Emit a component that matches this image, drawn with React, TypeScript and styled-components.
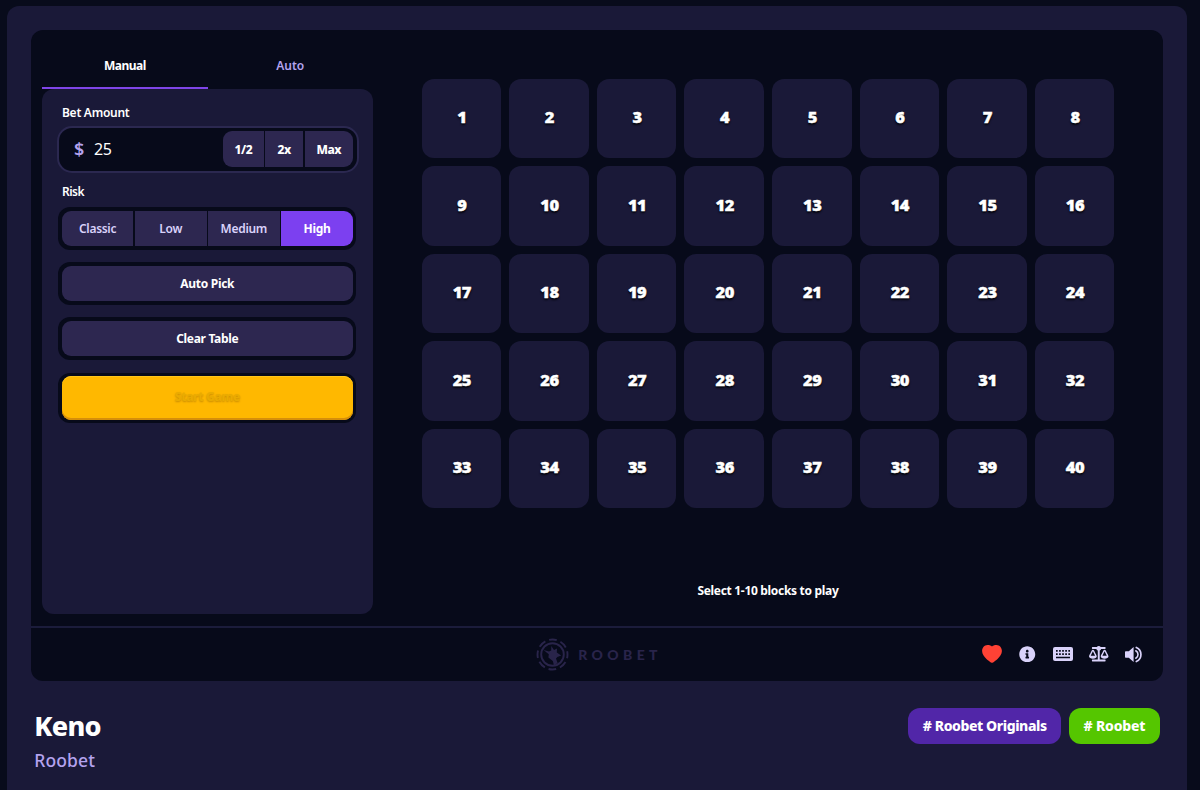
import React, { useState } from 'react';
import styled, { createGlobalStyle, css } from 'styled-components';
import { FaBalanceScale, FaInfoCircle } from 'react-icons/fa';

const colors = {
  page: '#080b1b',
  panel: '#1a1938',
  well: '#070a1a',
  button: '#2d2750',
  line: '#1b1c3b',
  lilac: '#b4a3ef',
  pale: '#d9d2fa',
  accent: '#7c40f0',
};

const GlobalStyle = createGlobalStyle`
  * { box-sizing: border-box; }
  body {
    margin: 0;
    background: ${colors.page};
    color: #fff;
    font-family: 'Noto Sans', 'Open Sans', sans-serif;
    overflow: hidden;
  }
  button {
    border: 0;
    padding: 0;
    margin: 0;
    color: inherit;
    font: inherit;
    letter-spacing: inherit;
    cursor: pointer;
  }
`;

const Page = styled.div`
  height: 790px;
  padding: 6px 13px 0 7px;
  overflow: hidden;
`;

const Shell = styled.main`
  height: 800px;
  padding: 23.5px 24px 0 23.7px;
  background: ${colors.panel};
  border-radius: 12px;
`;

const Game = styled.section`
  height: 651.5px;
  display: flex;
  flex-direction: column;
  background: ${colors.well};
  border-radius: 12px;
  overflow: hidden;
`;

const GameBody = styled.div`
  height: 596.5px;
  display: flex;
  padding: 13px 0 12.5px 11.6px;
`;

const Sidebar = styled.aside`
  width: 330.6px;
  display: flex;
  flex-direction: column;
`;

const Tabs = styled.div`
  display: flex;
  height: 46px;
`;

const Tab = styled.button<{ $active?: boolean }>`
  flex: 1;
  height: 46px;
  padding-top: 2px;
  background: none;
  border-bottom: 2px solid ${(p) => (p.$active ? '#7f45e8' : 'transparent')};
  color: ${(p) => (p.$active ? '#fff' : colors.lilac)};
  font-size: 12px;
  font-weight: ${(p) => (p.$active ? 700 : 600)};
  letter-spacing: ${(p) => (p.$active ? -0.48 : -0.05)}px;
`;

const Controls = styled.div`
  flex: 1;
  display: flex;
  flex-direction: column;
  padding: 15px 16px 0 15.5px;
  background: ${colors.panel};
  border-radius: 12px;
`;

const Label = styled.label<{ $tight?: boolean }>`
  display: block;
  height: 18px;
  line-height: 18px;
  padding-left: 4.2px;
  font-size: 12px;
  font-weight: 600;
  letter-spacing: ${(p) => (p.$tight ? -0.5 : -0.26)}px;
`;

const BetField = styled.div`
  display: flex;
  align-items: center;
  width: 302px;
  height: 47px;
  margin: 4px 0 10px -1.2px;
  padding: 0 3.5px 0 15.5px;
  background: ${colors.well};
  border: 2px solid #2b2850;
  border-radius: 15px;
`;

const Currency = styled.span`
  width: 20px;
  color: ${colors.lilac};
  font-size: 18px;
  font-weight: 600;
  line-height: 24px;
`;

const Amount = styled.span`
  flex: 1;
  font-size: 16px;
  line-height: 24px;
  letter-spacing: -0.6px;
`;

const Multipliers = styled.div`
  display: flex;
  gap: 1.5px;
  border-radius: 9px;
  overflow: hidden;
`;

const Multiplier = styled.button<{ $width: number }>`
  width: ${(p) => p.$width}px;
  height: 35.5px;
  background: ${colors.button};
  font-size: 12px;
  font-weight: 800;
  letter-spacing: -0.5px;
`;

const inset = css`
  width: 298px;
  margin-left: 0.5px;
  padding: 3.5px;
  background: ${colors.well};
  border-radius: 12px;
`;

const RiskGroup = styled.div`
  ${inset}
  display: flex;
  gap: 1.5px;
  margin-top: 6.5px;
`;

const RiskOption = styled.button<{ $active?: boolean }>`
  flex: 1;
  height: 35.7px;
  padding-top: 1px;
  background: ${(p) => (p.$active ? colors.accent : colors.button)};
  color: ${(p) => (p.$active ? '#fff' : colors.pale)};
  font-size: 12px;
  font-weight: ${(p) => (p.$active ? 700 : 600)};
  letter-spacing: ${(p) => (p.$active ? -0.35 : -0.3)}px;
  &:first-child { border-radius: 9px 0 0 9px; }
  &:last-child { border-radius: 0 9px 9px 0; }
`;

const Slot = styled.div<{ $gap: number }>`
  ${inset}
  display: flex;
  margin-top: ${(p) => p.$gap}px;
`;

const ActionButton = styled.button`
  flex: 1;
  height: 35.5px;
  background: ${colors.button};
  border-radius: 9px;
  font-size: 12px;
  font-weight: 700;
  letter-spacing: -0.3px;
`;

const StartButton = styled.button`
  flex: 1;
  height: 43.5px;
  padding-bottom: 2px;
  background: #ffb800;
  border-radius: 9px;
  box-shadow: inset 0 -2px 0 #d68f0a, inset 0 1px 0 #ffc61c;
  color: #eaab00;
  font-size: 12px;
  font-weight: 800;
  letter-spacing: -0.35px;
  text-shadow: 0 1px 2px #c98b00;
`;

const Board = styled.div`
  flex: 1;
  display: flex;
  flex-direction: column;
  align-items: center;
  padding-top: 36.2px;
`;

const Grid = styled.div`
  display: grid;
  grid-template-columns: repeat(8, 79.6px);
  grid-auto-rows: 79.5px;
  gap: 8.07px 8px;
`;

const Block = styled.button`
  background: ${colors.panel};
  border-radius: 12px;
  padding: 0 0 4px 1px;
  font-size: 16.5px;
  font-weight: 900;
  letter-spacing: -0.5px;
  -webkit-text-stroke: 0.4px #fff;
  text-shadow: 0 2px 2px #05060f, 0 1px 1px #05060f;
`;

const Hint = styled.p`
  margin: 73.3px 0 0;
  font-size: 12px;
  line-height: 18px;
  font-weight: 700;
  letter-spacing: -0.31px;
`;

const GameFooter = styled.footer`
  flex: 1;
  display: grid;
  grid-template-columns: 1fr auto 1fr;
  align-items: center;
  padding-bottom: 1px;
  border-top: 2px solid ${colors.line};
`;

const Brand = styled.div`
  grid-column: 2;
  display: flex;
  align-items: center;
  gap: 9px;
  color: #29244a;
`;

const BrandName = styled.span`
  font-family: Lato, 'Noto Sans', sans-serif;
  font-size: 14px;
  font-weight: 900;
  letter-spacing: 4.4px;
  margin-right: -4.4px;
`;

const IconRow = styled.div`
  grid-column: 3;
  display: flex;
  justify-content: flex-end;
  padding-right: 10.5px;
  color: ${colors.pale};
`;

const IconButton = styled.button<{ $red?: boolean }>`
  display: flex;
  align-items: center;
  justify-content: center;
  width: 35.7px;
  height: 24px;
  background: none;
  color: ${(p) => (p.$red ? '#ff4235' : 'inherit')};
`;

const Details = styled.section`
  display: flex;
  justify-content: space-between;
  padding: 27px 3.5px 0 3.5px;
`;

const Title = styled.h1`
  margin: 0;
  font-size: 27px;
  line-height: 36px;
  font-weight: 800;
  letter-spacing: -0.7px;
`;

const Provider = styled.div`
  font-size: 17.5px;
  line-height: 24px;
  margin-top: 4px;
  font-weight: 500;
  letter-spacing: 0.15px;
  color: ${colors.lilac};
`;

const Tags = styled.div`
  display: flex;
  gap: 8px;
`;

const Tag = styled.button<{ $green?: boolean }>`
  width: ${(p) => (p.$green ? 91 : 152.5)}px;
  height: 35.5px;
  padding: 0 0 1px 1px;
  border-radius: 12px;
  background: ${(p) => (p.$green ? '#55c600' : '#5126a8')};
  font-size: 14px;
  font-weight: 800;
  letter-spacing: ${(p) => (p.$green ? -0.2 : -0.42)}px;
`;

const BrandMark = () => (
  <svg width="33" height="33" viewBox="0 0 33 33" fill="none" stroke="currentColor">
    <circle cx="16.5" cy="16.5" r="15" strokeWidth="1.9" strokeDasharray="7.8 3.98" strokeDashoffset="3.9" />
    <circle cx="16.5" cy="16.500" r="11.300" strokeWidth="1.900" />
    <path
      d="M7.500 12l5.500 1.500 2.200-1 .1-4.500 2.700 4 3-1.500-.2 4 4.400 3-3.800 1.400-1.400 1.600 1.600 4.400-3.600 2.600-1.200-4.600-4.400-3.400.4-3.200z"
      fill="currentColor"
      stroke="none"
    />
  </svg>
);

const HeartIcon = () => (
  <svg width="20" height="18" viewBox="0 0 20 18" fill="currentColor">
    <path d="M10 1.600C11.200.5 12.800 0 14.500.1c3.200.2 5.400 2.700 5.400 6 0 3.200-2 5.700-4.600 8.100-1.600 1.400-3.200 2.500-4.300 3.300a1.700 1.700 0 0 1-2 0c-1.100-.8-2.700-1.900-4.300-3.300C2.100 11.800.1 9.300.1 6.100.1 2.800 2.300.3 5.500.1 7.200 0 8.800.5 10 1.600z" />
  </svg>
);

const KeyboardIcon = () => (
  <svg width="20" height="14" viewBox="0 0 20 14">
    <rect width="20" height="14" rx="2" fill="currentColor" />
    <path
      d="M3 3.900h14M3 7.100h14"
      stroke={colors.well}
      strokeWidth="1.700"
      strokeDasharray="1.700 1.380"
    />
    <path d="M3 10.500h14" stroke={colors.well} strokeWidth="1.500" />
  </svg>
);

const VolumeIcon = () => (
  <svg width="19" height="17" viewBox="0 0 19 17" fill="none" stroke="currentColor">
    <path d="M0 6.200c0-.6.4-1 1-1h2.800L8.600 1v15L3.800 11.800H1c-.6 0-1-.4-1-1z" fill="currentColor" stroke="none" />
    <path d="M10.800 4.800a4.200 4.200 0 0 1 0 7.400" strokeWidth="1.600" strokeLinecap="round" />
    <path d="M11.300 1.500a7.600 7.600 0 0 1 0 14" strokeWidth="1.700" strokeLinecap="round" />
  </svg>
);

const risks = ['Classic', 'Low', 'Medium', 'High'];

export default function App() {
  const [risk, setRisk] = useState('High');
  const blocks = Array.from({ length: 40 }, (_, i) => i + 1);

  return (
    <Page>
      <GlobalStyle />
      <Shell>
        <Game>
          <GameBody>
            <Sidebar>
              <Tabs>
                <Tab $active>Manual</Tab>
                <Tab>Auto</Tab>
              </Tabs>
              <Controls>
                <Label>Bet Amount</Label>
                <BetField>
                  <Currency>$</Currency>
                  <Amount>25</Amount>
                  <Multipliers>
                    <Multiplier $width={40.5}>1/2</Multiplier>
                    <Multiplier $width={38}>2x</Multiplier>
                    <Multiplier $width={48.5}>Max</Multiplier>
                  </Multipliers>
                </BetField>
                <Label $tight>Risk</Label>
                <RiskGroup>
                  {risks.map((name) => (
                    <RiskOption key={name} $active={name === risk} onClick={() => setRisk(name)}>
                      {name}
                    </RiskOption>
                  ))}
                </RiskGroup>
                <Slot $gap={12.5}>
                  <ActionButton>Auto Pick</ActionButton>
                </Slot>
                <Slot $gap={12.7}>
                  <ActionButton>Clear Table</ActionButton>
                </Slot>
                <Slot $gap={12.7}>
                  <StartButton>Start Game</StartButton>
                </Slot>
              </Controls>
            </Sidebar>
            <Board>
              <Grid>
                {blocks.map((n) => (
                  <Block key={n}>{n}</Block>
                ))}
              </Grid>
              <Hint>Select 1-10 blocks to play</Hint>
            </Board>
          </GameBody>
          <GameFooter>
            <Brand>
              <BrandMark />
              <BrandName>ROOBET</BrandName>
            </Brand>
            <IconRow>
              <IconButton $red aria-label="Favorite"><HeartIcon /></IconButton>
              <IconButton aria-label="Info"><FaInfoCircle size={16.5} /></IconButton>
              <IconButton aria-label="Hotkeys"><KeyboardIcon /></IconButton>
              <IconButton aria-label="Fairness"><FaBalanceScale size={19.5} /></IconButton>
              <IconButton aria-label="Sound"><VolumeIcon /></IconButton>
            </IconRow>
          </GameFooter>
        </Game>
        <Details>
          <div>
            <Title>Keno</Title>
            <Provider>Roobet</Provider>
          </div>
          <Tags>
            <Tag># Roobet Originals</Tag>
            <Tag $green># Roobet</Tag>
          </Tags>
        </Details>
      </Shell>
    </Page>
  );
}
